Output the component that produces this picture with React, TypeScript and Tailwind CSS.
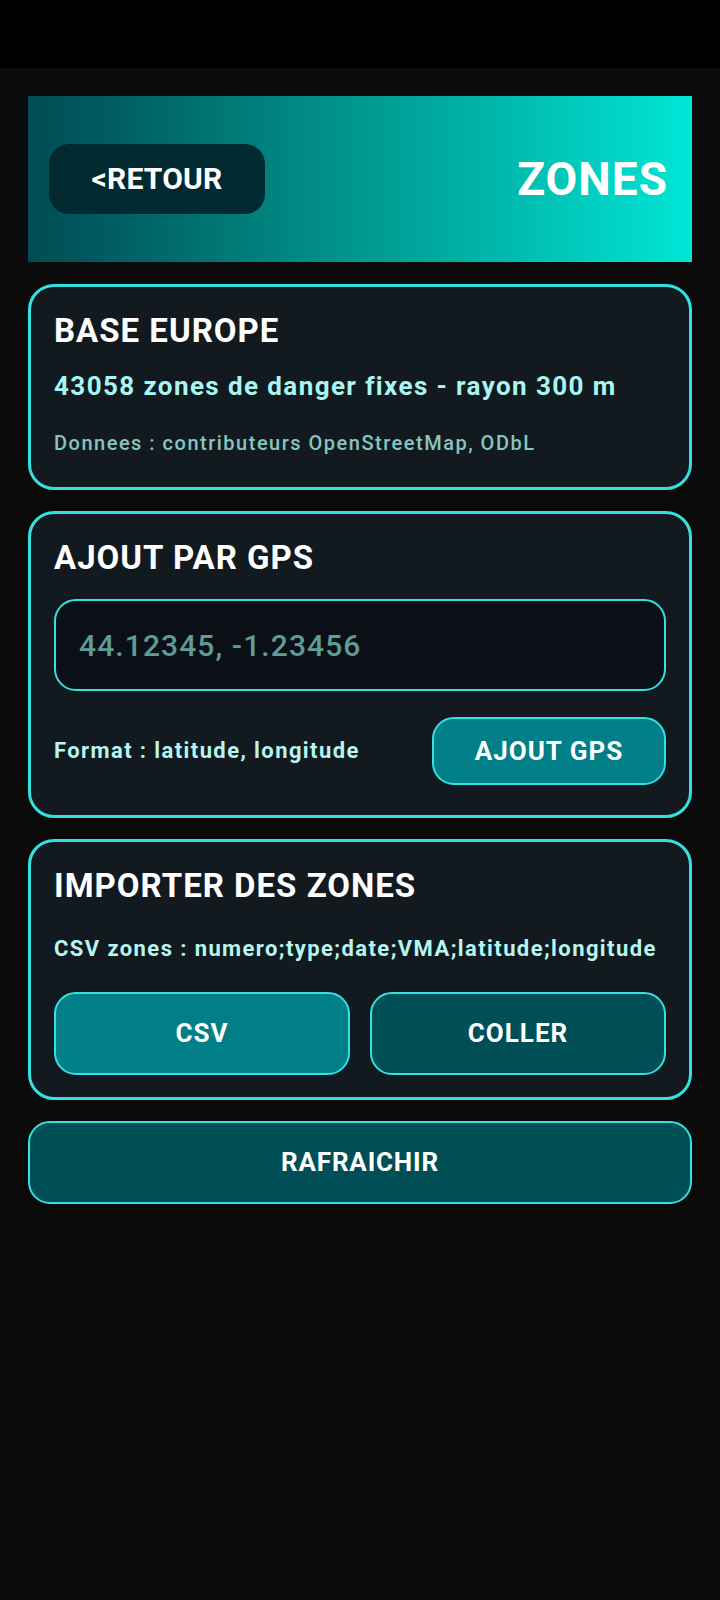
import React from "react";

const font = { fontFamily: "Roboto, 'Noto Sans', sans-serif" };

export default function App() {
  return (
    <div className="min-h-[1600px] w-[720px] bg-[#0b0b0b]" style={font}>
      <div className="h-[68px] bg-black" />
      <div className="flex flex-col gap-[21px] px-[28px] pt-[28px]">
        <div className="mb-[1px] flex h-[166px] items-center justify-between bg-gradient-to-r from-[#004b53] via-[#00988f] to-[#00e6d6] pl-[21px] pr-[24px]">
          <div className="flex h-[70px] w-[216px] items-center justify-center rounded-[20px] bg-[#002a30] text-[30px] font-bold leading-none tracking-[0.2px] text-white">
            &lt;RETOUR
          </div>
          <div className="text-[46px] font-bold leading-none tracking-[1px] text-white">ZONES</div>
        </div>

        <div className="rounded-[26px] border-[3px] border-[#34e0e0] bg-[#121a1f] px-[23px] pt-[24px] pb-[32px]">
          <div className="text-[33px] font-bold leading-[40px] tracking-[1px] text-white">BASE EUROPE</div>
          <div className="mt-[20px] text-[26px] font-bold leading-[30px] tracking-[1.4px] text-[#a8f6f4]">
            43058 zones de danger fixes - rayon 300 m
          </div>
          <div className="mt-[30px] text-[20px] font-medium leading-[24px] tracking-[1.5px] text-[#86c6c2]">
            Donnees : contributeurs OpenStreetMap, ODbL
          </div>
        </div>

        <div className="rounded-[26px] border-[3px] border-[#34e0e0] bg-[#121a1f] px-[23px] pt-[24px] pb-[30px]">
          <div className="text-[33px] font-bold leading-[40px] tracking-[1px] text-white">AJOUT PAR GPS</div>
          <div className="mt-[21px] flex h-[92px] items-center rounded-[22px] border-2 border-[#34e0e0] bg-[#0a1016] px-[23px] text-[30px] font-medium tracking-[1.1px] text-[#5f9c98]">
            44.12345, -1.23456
          </div>
          <div className="mt-[26px] flex items-center justify-between">
            <div className="text-[22px] font-bold leading-[26px] tracking-[1.4px] text-[#b6f6f1]">
              Format : latitude, longitude
            </div>
            <div className="flex h-[68px] w-[234px] items-center justify-center rounded-[22px] border-2 border-[#34e0e0] bg-[#007f88] text-[26px] font-bold tracking-[1px] text-white">
              AJOUT GPS
            </div>
          </div>
        </div>

        <div className="rounded-[26px] border-[3px] border-[#34e0e0] bg-[#121a1f] px-[23px] pt-[24px] pb-[22px]">
          <div className="text-[33px] font-bold leading-[40px] tracking-[1px] text-white">IMPORTER DES ZONES</div>
          <div className="mt-[30px] text-[22px] font-bold leading-[26px] tracking-[1.4px] text-[#b6f6f1]">
            CSV zones : numero;type;date;VMA;latitude;longitude
          </div>
          <div className="mt-[30px] grid grid-cols-2 gap-[20px]">
            <div className="flex h-[83px] items-center justify-center rounded-[22px] border-2 border-[#34e0e0] bg-[#007f88] text-[26px] font-bold tracking-[1px] text-white">
              CSV
            </div>
            <div className="flex h-[83px] items-center justify-center rounded-[22px] border-2 border-[#34e0e0] bg-[#004f56] text-[26px] font-bold tracking-[1px] text-white">
              COLLER
            </div>
          </div>
        </div>

        <div className="flex h-[83px] items-center justify-center rounded-[22px] border-2 border-[#34e0e0] bg-[#004f56] text-[26px] font-bold tracking-[0.8px] text-white">
          RAFRAICHIR
        </div>
      </div>
    </div>
  );
}
